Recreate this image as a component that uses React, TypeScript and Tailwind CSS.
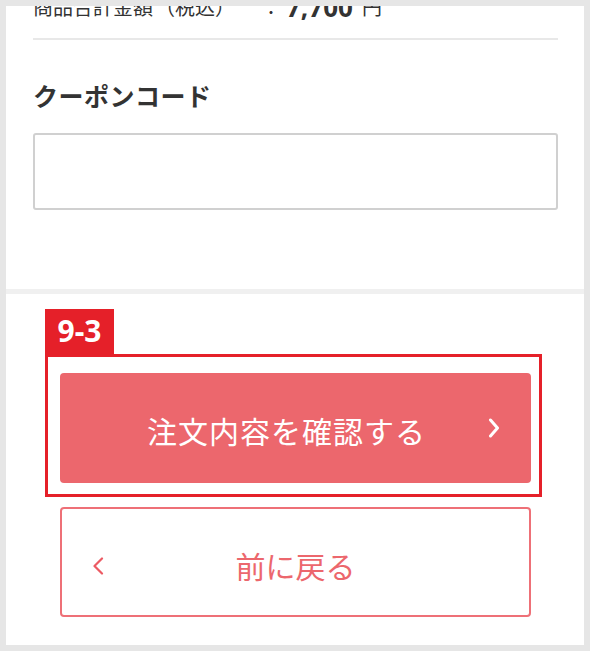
import React from "react";

const jp = { fontFamily: '"Noto Sans CJK JP", "Noto Sans", sans-serif' };

export default function App() {
  return (
    <div className="w-[590px] h-[651px] bg-[#e6e6e6] p-[6px]" style={jp}>
      <div className="w-[578px] h-[639px] bg-white overflow-hidden flex flex-col">
        {/* Upper section */}
        <div className="pl-[27px] pr-[26px] flex flex-col">
          <div className="mt-[-15px] h-[28px] flex items-end text-[20px] leading-[24px] text-[#333] whitespace-nowrap">
            <span>商品合計金額</span>
            <span className="ml-[2px]">（税込）</span>
            <span className="ml-[26px]">：</span>
            <span className="font-bold text-[26px] ml-[5px] mr-[9px]" style={{ fontFamily: '"Noto Sans", sans-serif' }}>7,700</span>
            <span>円</span>
          </div>
          <div className="mt-[19px] h-[2px] bg-[#e8e8e8]" />
          <div className="mt-[40px] text-[25px] leading-[30px] font-bold text-[#333] tracking-[0.5px]">
            クーポンコード
          </div>
          <div className="mt-[23px] h-[77px] border-2 border-[#d0d0d0] rounded-[3px] bg-white" />
        </div>
        <div className="mt-[79px] h-[5px] bg-[#f0f0f0]" />

        {/* Lower section */}
        <div className="pl-[54px] pr-[53px] pt-[79px] flex flex-col">
          <div className="relative">
            <div className="absolute left-[-15px] top-[-64px] w-[69px] h-[46px] bg-[#e52029] flex items-center justify-center">
              <span className="text-white font-bold text-[30px] leading-none mt-[-2px]" style={{ fontFamily: '"Noto Sans", sans-serif' }}>9-3</span>
            </div>
            <div className="absolute left-[-15px] right-[-11px] top-[-19px] bottom-[-14px] border-[3px] border-[#e52029]" />
            <div className="relative h-[110px] rounded-[4px] bg-[#ec676d] flex items-center justify-center">
              <span className="text-white text-[30px] leading-none tracking-[1px] mr-[18px] mt-[3px]">注文内容を確認する</span>
              <svg className="absolute right-[31px] top-[45px]" width="12" height="20" viewBox="0 0 12 20" fill="none">
                <path d="M2.5 2 L9.5 10 L2.5 18" stroke="white" strokeWidth="3" strokeLinecap="round" strokeLinejoin="round" />
              </svg>
            </div>
          </div>
          <div className="mt-[24px] h-[110px] rounded-[4px] border-2 border-[#ee7077] relative flex items-center justify-center">
            <span className="text-[#ec676d] text-[30px] leading-none mt-[5px]">前に戻る</span>
            <svg className="absolute left-[30px] top-[48px]" width="12" height="18" viewBox="0 0 12 18" fill="none">
              <path d="M10 1.5 L2.5 9 L10 16.5" stroke="#ec5a63" strokeWidth="2.2" strokeLinecap="round" strokeLinejoin="round" />
            </svg>
          </div>
        </div>
      </div>
    </div>
  );
}
